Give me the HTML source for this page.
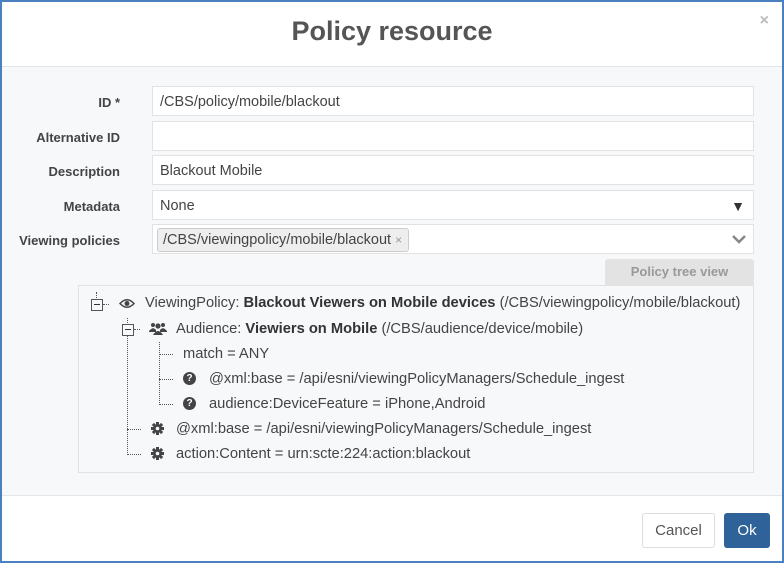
<!DOCTYPE html>
<html><head><style>
body{margin:0;width:784px;height:563px;background:#4a7fc0;font-family:"Liberation Sans",sans-serif;position:relative;overflow:hidden}
.m{position:absolute;left:2px;top:2px;width:780px;height:559px;background:#fff}
.hd{position:absolute;left:0;top:0;width:780px;height:64px;border-bottom:1px solid #e5e5e5;background:#fff}
.hd h1{margin:0;position:absolute;left:0;right:0;top:14px;text-align:center;font-size:27px;font-weight:bold;color:#555}
.x{position:absolute;right:13px;top:10px;color:#bbb;font-size:16px;font-weight:bold}
.bd{position:absolute;left:0;top:65px;width:780px;height:428px;background:#f7f8fa;border-bottom:1px solid #e5e5e5}
.lb{position:absolute;right:662px;font-size:13px;font-weight:bold;color:#444;text-align:right;white-space:nowrap}
.in{position:absolute;left:150px;width:593px;height:28px;border:1px solid #e2e2e2;background:#fff;font-size:14.5px;color:#444;line-height:30px;padding-left:7px}
.tag{position:absolute;left:4px;top:3px;height:22px;line-height:23px;background:#eee;border:1px solid #ccc;border-radius:3px;padding:0 6px 0 5px;font-size:14.5px}
.btv{position:absolute;left:603px;top:192px;width:149px;height:26px;background:#e3e3e3;color:#999;font-size:13px;font-weight:bold;text-align:center;line-height:26px;border-radius:3px 3px 0 0}
.tree{position:absolute;left:76px;top:218px;width:674px;height:186px;border:1px solid #e2e2e2;background:#f7f8fa;font-size:14.7px;color:#444}
.r{position:absolute;white-space:nowrap}
.r b{color:#333}
.dl{position:absolute;border-left:1px dotted #555}
.dh{position:absolute;border-top:1px dotted #555}
.bx{position:absolute;width:10px;height:10px;border:1px solid #555;background:#f7f8fa}
.bx:after{content:"";position:absolute;left:2px;top:4px;width:6px;height:1px;background:#333}
.ic{position:absolute;width:13px;height:13px;border-radius:50%;background:#444;color:#fff;font-size:10px;font-weight:bold;text-align:center;line-height:13px}
svg{position:absolute}
.cn{position:absolute;left:640px;top:511px;width:71px;height:33px;border:1px solid #ddd;border-radius:3px;background:#fff;color:#555;font-size:15px;text-align:center;line-height:33px}
.ok{position:absolute;left:722px;top:511px;width:46px;height:35px;border-radius:3px;background:#2e6299;color:#fff;font-size:15px;text-align:center;line-height:35px}
</style></head><body><div class="m">
<div class="hd"><h1>Policy resource</h1><div class="x">×</div></div>
<div class="bd">
<div class="lb" style="top:28px">ID *</div>
<div class="lb" style="top:63px">Alternative ID</div>
<div class="lb" style="top:97px">Description</div>
<div class="lb" style="top:132px">Metadata</div>
<div class="lb" style="top:166px">Viewing policies</div>
<div class="in" style="top:19px">/CBS/policy/mobile/blackout</div>
<div class="in" style="top:54px"></div>
<div class="in" style="top:88px">Blackout Mobile</div>
<div class="in" style="top:123px">None<span style="position:absolute;right:8px;top:0;font-size:14px;color:#333">▼</span></div>
<div class="in" style="top:157px"><span class="tag">/CBS/viewingpolicy/mobile/blackout <span style="color:#999;font-size:12px">×</span></span>
<svg style="right:7px;top:10px" width="14" height="9" viewBox="0 0 14 9"><path d="M1 1 L7 7 L13 1" fill="none" stroke="#888" stroke-width="2.5"/></svg></div>
<div class="btv">Policy tree view</div>
<div class="tree">
<div class="dl" style="left:17px;top:6px;height:8px"></div>
<div class="bx" style="left:12px;top:13px"></div><div class="dh" style="left:24px;top:18px;width:6px"></div>
<svg style="left:40px;top:12px" width="16" height="11" viewBox="0 0 16 11"><path d="M1 5.5 Q8 -2 15 5.5 Q8 13 1 5.5Z" fill="none" stroke="#444" stroke-width="1.5"/><circle cx="8" cy="5.5" r="2.5" fill="#444"/></svg>
<div class="r" style="left:66px;top:9px">ViewingPolicy: <b>Blackout Viewers on Mobile devices</b> (/CBS/viewingpolicy/mobile/blackout)</div>
<div class="dl" style="left:48px;top:32px;height:137px"></div>
<div class="bx" style="left:43px;top:38px"></div><div class="dh" style="left:55px;top:43px;width:6px"></div>
<svg style="left:70px;top:36px" width="18" height="13" viewBox="0 0 18 13"><circle cx="4" cy="3" r="2" fill="#444"/><circle cx="14" cy="3" r="2" fill="#444"/><circle cx="9" cy="4" r="2.6" fill="#444"/><path d="M0 9 Q4 4 7 8 L7 10 H0Z M18 9 Q14 4 11 8 L11 10 H18Z M4 13 Q9 5 14 13Z" fill="#444"/></svg>
<div class="r" style="left:97px;top:35px">Audience: <b>Viewiers on Mobile</b> (/CBS/audience/device/mobile)</div>
<div class="dl" style="left:80px;top:56px;height:63px"></div>
<div class="dh" style="left:80px;top:68px;width:14px"></div>
<div class="r" style="left:104px;top:60px">match = ANY</div>
<div class="dh" style="left:80px;top:93px;width:14px"></div>
<div class="ic" style="left:104px;top:86px">?</div>
<div class="r" style="left:130px;top:85px">@xml:base = /api/esni/viewingPolicyManagers/Schedule_ingest</div>
<div class="dh" style="left:80px;top:118px;width:14px"></div>
<div class="ic" style="left:104px;top:111px">?</div>
<div class="r" style="left:130px;top:110px">audience:DeviceFeature = iPhone,Android</div>
<div class="dh" style="left:48px;top:143px;width:14px"></div>
<svg style="left:72px;top:136px" width="13" height="13" viewBox="0 0 13 13"><g fill="#444"><circle cx="6.5" cy="6.5" r="4.3"/><rect x="5" y="0" width="3" height="13"/><rect x="0" y="5" width="13" height="3"/><rect x="5" y="0" width="3" height="13" transform="rotate(45 6.5 6.5)"/><rect x="5" y="0" width="3" height="13" transform="rotate(-45 6.5 6.5)"/></g><circle cx="6.5" cy="6.5" r="1.8" fill="#f7f8fa"/></svg>
<div class="r" style="left:97px;top:135px">@xml:base = /api/esni/viewingPolicyManagers/Schedule_ingest</div>
<div class="dh" style="left:48px;top:168px;width:14px"></div>
<svg style="left:72px;top:161px" width="13" height="13" viewBox="0 0 13 13"><g fill="#444"><circle cx="6.5" cy="6.5" r="4.3"/><rect x="5" y="0" width="3" height="13"/><rect x="0" y="5" width="13" height="3"/><rect x="5" y="0" width="3" height="13" transform="rotate(45 6.5 6.5)"/><rect x="5" y="0" width="3" height="13" transform="rotate(-45 6.5 6.5)"/></g><circle cx="6.5" cy="6.5" r="1.8" fill="#f7f8fa"/></svg>
<div class="r" style="left:97px;top:160px">action:Content = urn:scte:224:action:blackout</div>
</div>
</div>
<div class="cn">Cancel</div><div class="ok">Ok</div>
</div></body></html>
